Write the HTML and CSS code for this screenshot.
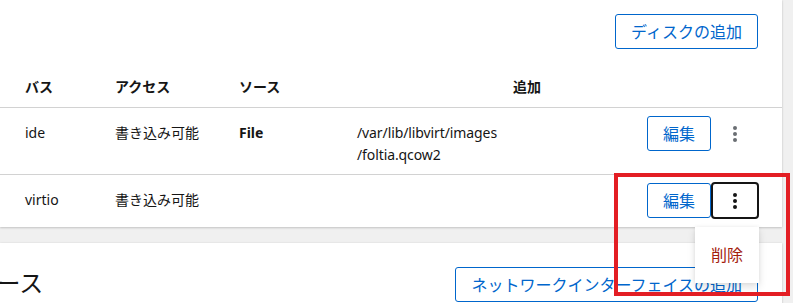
FILE: index.html
```html
<!DOCTYPE html>
<html lang="ja">
<head>
    <meta charset="UTF-8">
    <meta name="viewport" content="width=device-width, initial-scale=1.0">
    <title>ディスク</title>
    <link rel="stylesheet" href="styles.css">
</head>
<body>

<div class="page">
    <section class="card disks">
        <div class="toolbar">
            <button class="btn btn-secondary">ディスクの追加</button>
        </div>

        <table class="disk-table">
            <thead>
                <tr>
                    <th class="col-bus">バス</th>
                    <th class="col-access">アクセス</th>
                    <th class="col-source">ソース</th>
                    <th class="col-path"></th>
                    <th class="col-actions">追加</th>
                </tr>
            </thead>
            <tbody>
                <tr>
                    <td class="col-bus">ide</td>
                    <td class="col-access">書き込み可能</td>
                    <td class="col-source"><strong>File</strong></td>
                    <td class="col-path">/var/lib/libvirt/images<wbr>/foltia.qcow2</td>
                    <td class="col-actions">
                        <div class="actions">
                            <button class="btn btn-secondary">編集</button>
                            <div class="kebab-wrap">
                                <button class="kebab" aria-label="操作">
                                    <svg width="4" height="16" viewBox="0 0 4 16"><circle cx="2" cy="2" r="2"/><circle cx="2" cy="8" r="2"/><circle cx="2" cy="14" r="2"/></svg>
                                </button>
                            </div>
                        </div>
                    </td>
                </tr>
                <tr>
                    <td class="col-bus">virtio</td>
                    <td class="col-access">書き込み可能</td>
                    <td class="col-source"></td>
                    <td class="col-path"></td>
                    <td class="col-actions">
                        <div class="actions">
                            <button class="btn btn-secondary">編集</button>
                            <div class="kebab-wrap">
                                <button class="kebab open" aria-label="操作">
                                    <svg width="4" height="16" viewBox="0 0 4 16"><circle cx="2" cy="2" r="2"/><circle cx="2" cy="8" r="2"/><circle cx="2" cy="14" r="2"/></svg>
                                </button>
                                <ul class="menu">
                                    <li class="menu-item danger">削除</li>
                                </ul>
                            </div>
                        </div>
                    </td>
                </tr>
            </tbody>
        </table>
    </section>

    <section class="card nics">
        <div class="card-head">
            <h2>ネットワークインターフェース</h2>
            <button class="btn btn-secondary">ネットワークインターフェイスの追加</button>
        </div>
    </section>
</div>

<div class="highlight"></div>

</body>
</html>
```

FILE: styles.css
```css
body {
    font-family: 'Noto Sans', 'Noto Sans CJK JP', sans-serif;
    margin: 0;
    padding: 0;
    background: #f0f0f0;
    color: #151515;
    overflow: hidden;
    height: 303px;
}
.page {
    width: 782px;
}
.card {
    background: #fff;
    box-shadow: 0 1px 2px rgba(3, 3, 3, 0.16), 0 0 2px rgba(3, 3, 3, 0.08);
}
.disks {
    padding-top: 14px;
    margin-bottom: 16px;
}
.toolbar {
    display: flex;
    justify-content: flex-end;
    padding-right: 24px;
    margin-bottom: 15px;
}
.btn {
    font-family: inherit;
    font-size: 16px;
    line-height: 24px;
    padding: 5px 15px 4px;
    border-radius: 3px;
    cursor: pointer;
    background: #fff;
    white-space: nowrap;
}
.btn-secondary {
    color: #0066cc;
    border: 1px solid #0066cc;
}
.disk-table {
    width: 782px;
    border-collapse: collapse;
    table-layout: fixed;
    font-size: 14px;
}
.disk-table th {
    text-align: left;
    font-weight: 700;
    line-height: 21px;
    padding: 12px 0 10px;
    border-bottom: 1px solid #d2d2d2;
}
.disk-table td {
    vertical-align: top;
    line-height: 22px;
    padding: 14px 0 8px;
}
.disk-table tbody tr + tr td {
    border-top: 1px solid #d2d2d2;
}
.col-bus {
    width: 90px;
    padding-left: 25px !important;
}
.col-access {
    width: 124px;
}
.col-source {
    width: 118px;
}
.col-path {
    width: 156px;
    letter-spacing: -0.1px;
}
.disk-table td.col-actions {
    padding: 8px 23px 8px 0;
}
.actions {
    display: flex;
    justify-content: flex-end;
    align-items: flex-start;
}
.kebab-wrap {
    position: relative;
}
.kebab {
    display: flex;
    align-items: center;
    justify-content: center;
    width: 48px;
    height: 37px;
    margin-top: -1px;
    padding: 0;
    background: #fff;
    border: 2px solid transparent;
    border-radius: 4px;
    fill: #6a6e73;
    cursor: pointer;
}
.kebab.open {
    border-color: #151515;
    fill: #151515;
}
.menu {
    position: absolute;
    top: 44px;
    right: 0;
    margin: 0;
    padding: 8px 0;
    list-style: none;
    background: #fff;
    box-shadow: 0 4px 8px rgba(3, 3, 3, 0.12), 0 0 4px rgba(3, 3, 3, 0.06);
    z-index: 2;
}
.menu-item {
    font-size: 16px;
    line-height: 24px;
    padding: 8px 16px;
    white-space: nowrap;
}
.danger {
    color: #a3200c;
}
.nics {
    padding: 24px;
    height: 60px;
}
.card-head {
    display: flex;
    justify-content: space-between;
    align-items: flex-start;
}
.card-head h2 {
    margin: 0 0 0 -314px;
    font-size: 24px;
    font-weight: 400;
    line-height: 31px;
    white-space: nowrap;
}
.highlight {
    position: absolute;
    left: 614px;
    top: 173px;
    width: 176px;
    height: 123px;
    box-sizing: border-box;
    border: 4px solid #e31e24;
    pointer-events: none;
    z-index: 5;
}
```
